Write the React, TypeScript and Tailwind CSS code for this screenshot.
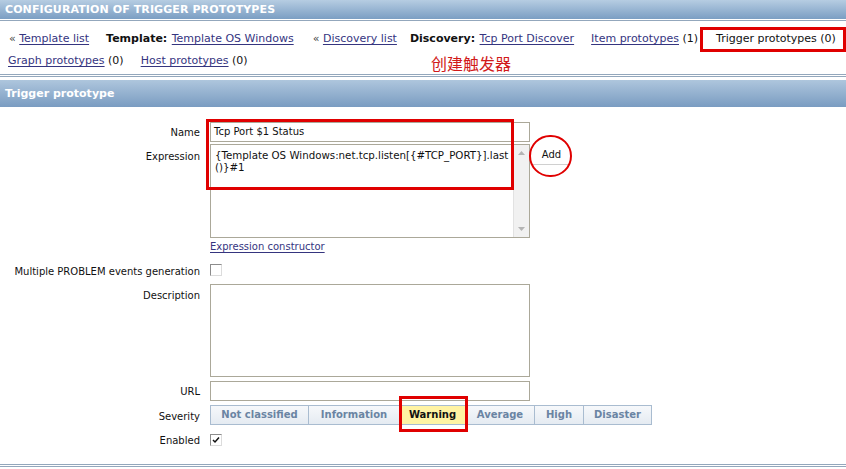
import React from "react";

const Link = ({ children }: { children: React.ReactNode }) => (
  <span className="text-[#35357f] underline underline-offset-[2px] decoration-[#35357f]">{children}</span>
);

const Checkbox = ({ checked }: { checked?: boolean }) => (
  <div className="w-[12px] h-[12px] border border-t-[#8c8c8c] border-l-[#8c8c8c] border-r-[#dcdcdc] border-b-[#dcdcdc] bg-white flex items-center justify-center">
    {checked && (
      <svg width="8" height="8" viewBox="0 0 8 8">
        <path d="M1 4 L3 6 L7 1.5" stroke="#111" strokeWidth="1.5" fill="none" />
      </svg>
    )}
  </div>
);

const SevBtn = ({ label, w, active }: { label: string; w: string; active?: boolean }) => (
  <div
    className={`${w} h-[20px] flex items-center justify-center font-bold border border-[#a9bcd0] -ml-[1px] first:ml-0 ${
      active ? "bg-[#fff3a3] text-[#111]" : "bg-gradient-to-b from-[#f6f8fb] to-[#e5ebf2] text-[#6a84a3]"
    }`}
  >
    {label}
  </div>
);

export default function App() {
  return (
    <div className="w-[846px] h-[469px] bg-white relative overflow-hidden font-['DejaVu_Sans',Verdana,sans-serif] text-[10px] leading-[12px] text-[#111]">
      {/* top header */}
      <div className="h-[19px] bg-gradient-to-b from-[#b6cde2] to-[#7b9ec3] flex items-center pl-[5px] text-white font-bold text-[11px] tracking-[0.1px]">
        CONFIGURATION OF TRIGGER PROTOTYPES
      </div>
      <div className="h-[1px] bg-white" />
      <div className="h-[1px] bg-[#93a7bc]" />

      {/* navigation */}
      <div className="h-[53px] pt-[11px] pl-[9px] text-[11px] leading-[14px]">
        <div className="h-[14px] flex items-center gap-[15px] whitespace-nowrap">
          <span>
            <span className="text-[#444]">«</span> <Link>Template list</Link>
          </span>
          <span className="ml-[2px]">
            <span className="font-bold mr-[1px]">Template:</span> <Link>Template OS Windows</Link>
          </span>
          <span className="ml-[4px]">
            <span className="text-[#444]">«</span> <Link>Discovery list</Link>
          </span>
          <span className="-ml-[2px]">
            <span className="font-bold mr-[1px]">Discovery:</span> <Link>Tcp Port Discover</Link>
          </span>
          <span className="ml-[2px]">
            <Link>Item prototypes</Link> (1)
          </span>
          <span className="ml-[3px]">Trigger prototypes (0)</span>
        </div>
        <div className="h-[14px] mt-[8px] -ml-[1px] flex items-center gap-[17px] whitespace-nowrap">
          <span>
            <Link>Graph prototypes</Link> (0)
          </span>
          <span>
            <Link>Host prototypes</Link> (0)
          </span>
        </div>
      </div>
      <div className="h-[1px] bg-[#93a7bc]" />
      <div className="h-[1px] bg-white" />
      <div className="h-[1px] bg-[#93a7bc]" />
      <div className="h-[3px] bg-white" />

      {/* section header */}
      <div className="h-[27px] bg-gradient-to-b from-[#aec6dd] to-[#7a9cc1] flex items-center pl-[5px] text-white font-bold text-[11px]">
        Trigger prototype
      </div>

      {/* form */}
      <div className="pt-[15px] flex flex-col">
        {/* Name */}
        <div className="flex items-center">
          <div className="w-[200px] text-right pt-[2px]">Name</div>
          <div className="ml-[10px] w-[320px] h-[20px] border border-[#aba899] flex items-center pl-[3px]">
            Tcp Port $1 Status
          </div>
        </div>
        {/* Expression */}
        <div className="flex items-start mt-[2px]">
          <div className="w-[200px] text-right pt-[7px]">Expression</div>
          <div className="ml-[10px] w-[320px] h-[94px] border border-[#aba899] flex">
            <div className="flex-1 pl-[4px] pt-[5px] text-[10.25px] leading-[11.5px] whitespace-pre">
              {"{Template OS Windows:net.tcp.listen[{#TCP_PORT}].last\n()}#1"}
            </div>
            <div className="w-[16px] bg-[#f1f1f1] border-l border-[#e2e2e2] flex flex-col items-center justify-between py-[6px]">
              <svg width="7" height="4" viewBox="0 0 7 4">
                <path d="M0 4 L3.5 0 L7 4 Z" fill="#b4b4b4" />
              </svg>
              <svg width="7" height="4" viewBox="0 0 7 4">
                <path d="M0 0 L3.5 4 L7 0 Z" fill="#b4b4b4" />
              </svg>
            </div>
          </div>
          <div className="ml-[3px] mt-[2px] w-[37px] h-[19px] border-b border-[#d0d0d0] bg-white flex items-center justify-center text-[#111]">
            Add
          </div>
        </div>
        {/* Expression constructor */}
        <div className="ml-[210px] mt-[3px] h-[12px]">
          <Link>Expression constructor</Link>
        </div>
        {/* Multiple PROBLEM */}
        <div className="flex items-center mt-[11px] h-[12px]">
          <div className="w-[200px] text-right pt-[3px]">Multiple PROBLEM events generation</div>
          <div className="ml-[10px]">
            <Checkbox />
          </div>
        </div>
        {/* Description */}
        <div className="flex items-start mt-[8px]">
          <div className="w-[200px] text-right pt-[6px]">Description</div>
          <div className="ml-[10px] w-[320px] h-[93px] border border-[#aba899]" />
        </div>
        {/* URL */}
        <div className="flex items-center mt-[4px]">
          <div className="w-[200px] text-right pt-[1px]">URL</div>
          <div className="ml-[10px] w-[320px] h-[20px] border border-[#aba899]" />
        </div>
        {/* Severity */}
        <div className="flex items-center mt-[4px]">
          <div className="w-[200px] text-right pt-[4px]">Severity</div>
          <div className="ml-[10px] flex">
            <SevBtn label="Not classified" w="w-[99px]" />
            <SevBtn label="Information" w="w-[92px]" />
            <SevBtn label="Warning" w="w-[67px]" active />
            <SevBtn label="Average" w="w-[70px]" />
            <SevBtn label="High" w="w-[50px]" />
            <SevBtn label="Disaster" w="w-[69px]" />
          </div>
        </div>
        {/* Enabled */}
        <div className="flex items-center mt-[9px] h-[12px]">
          <div className="w-[200px] text-right pt-[1px]">Enabled</div>
          <div className="ml-[10px]">
            <Checkbox checked />
          </div>
        </div>
        <div className="h-[18px]" />
        <div className="h-[1px] bg-[#93a7bc]" />
        <div className="h-[1px] bg-white" />
        <div className="h-[1px] bg-[#93a7bc]" />
      </div>

      {/* annotations */}
      <div className="absolute left-[700px] top-[27px] w-[146px] h-[25px] border-[3px] border-[#e00000]" />
      <div className="absolute left-[431px] top-[54px] text-[16px] leading-[18px] text-[#d11a1a] font-['Noto_Sans_CJK_SC',sans-serif]">
        创建触发器
      </div>
      <div className="absolute left-[206px] top-[119px] w-[308px] h-[71px] border-[3px] border-[#e00000]" />
      <div className="absolute left-[529px] top-[135px] w-[43px] h-[42px] rounded-full border-[2.5px] border-[#e00000]" />
      <div className="absolute left-[399px] top-[396px] w-[69px] h-[36px] border-[3px] border-[#e00000]" />
    </div>
  );
}
